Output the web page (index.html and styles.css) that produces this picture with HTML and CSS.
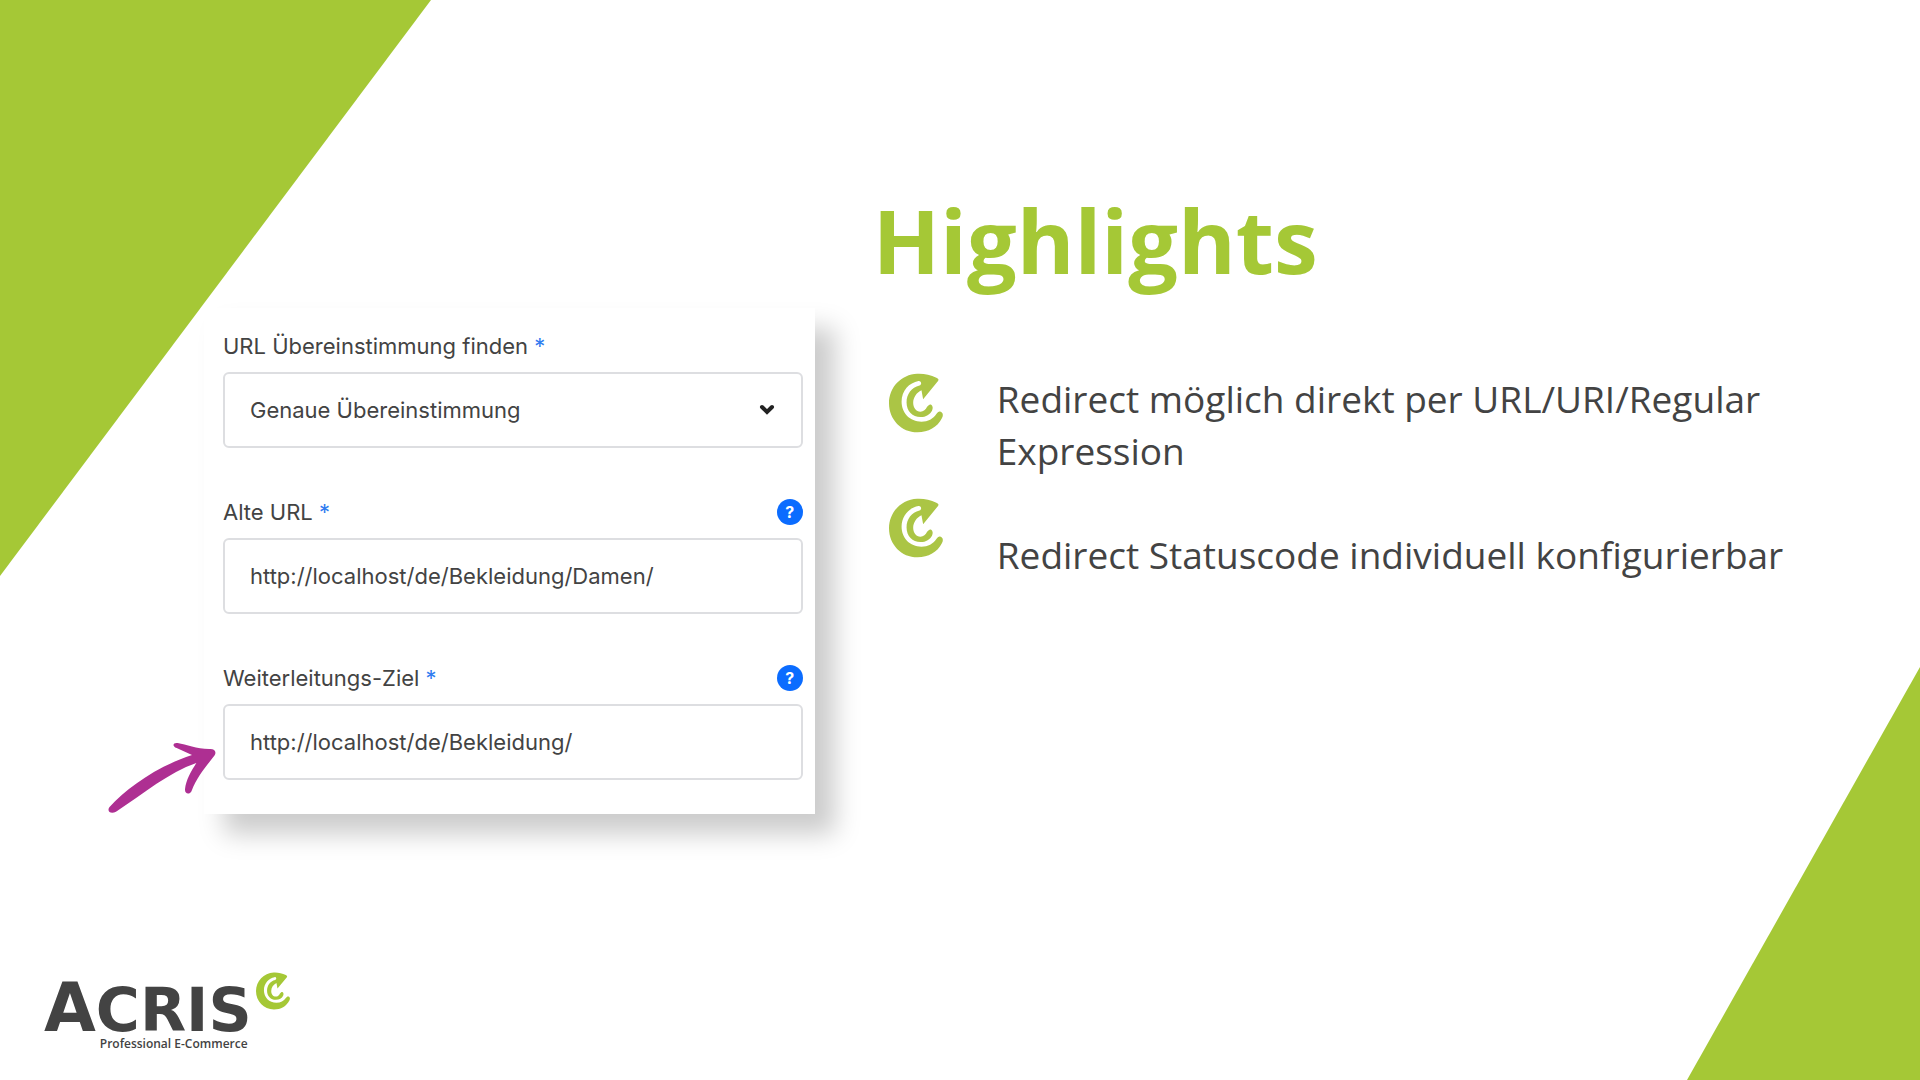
FILE: index.html
```html
<!DOCTYPE html>
<html lang="de">
<head>
<meta charset="utf-8">
<meta name="viewport" content="width=device-width, initial-scale=1">
<title>ACRIS – Highlights</title>
<link rel="stylesheet" href="styles.css">
</head>
<body class="page">
<svg class="symbols" aria-hidden="true">
  <symbol id="acris-mark" viewBox="57 57 163 179">
    <path d="M200 70C182 61 162 57 142 58C94 60 57 99 57 147C57 196 94 235 143 235C176 235 203 220 217 192C222 182 219 175 213 173C208 171 204 174 200 180C190 195 175 203 155 203C120 203 95 177 95 143C95 109 118 85 146 80C155 79 157 91 149 94C125 100 110 120 110 145C110 171 128 189 152 189C169 189 181 181 187 169C191 160 188 153 183 151C179 150 176 153 172 158C168 167 161 173 152 173C139 173 130 161 130 146C130 130 140 115 155 108L160 135L205 80C208 76 206 73 200 70Z"/>
  </symbol>
</svg>
<div class="corner corner-top" aria-hidden="true"></div>
<div class="corner corner-bottom" aria-hidden="true"></div>

<main class="slide">
  <form class="card">
    <div class="field">
      <div class="field-head">
        <label for="match">URL Übereinstimmung finden <span class="required">*</span></label>
      </div>
      <div class="select-wrap">
        <select class="control" id="match"><option>Genaue Übereinstimmung</option></select>
        <svg class="chevron" viewBox="0 0 16 12" aria-hidden="true"><path d="M3 3L8 8L13 3"/></svg>
      </div>
    </div>
    <div class="field">
      <div class="field-head">
        <label for="old-url">Alte URL <span class="required">*</span></label>
        <button class="help" type="button">?</button>
      </div>
      <input class="control" id="old-url" type="text" value="http://localhost/de/Bekleidung/Damen/">
    </div>
    <div class="field">
      <div class="field-head">
        <label for="target">Weiterleitungs-Ziel <span class="required">*</span></label>
        <button class="help" type="button">?</button>
      </div>
      <input class="control" id="target" type="text" value="http://localhost/de/Bekleidung/">
    </div>
    <svg class="arrow" viewBox="0 0 450 330" aria-hidden="true">
      <path d="M58 262C110 205 195 142 306 105L260 84C245 78 249 67 263 69C290 73 322 88 361 87C374 87 380 96 374 106C352 135 322 168 305 212C301 224 284 224 285 208C288 180 303 154 319 129C235 158 165 218 78 275C62 284 50 273 58 262Z"/>
    </svg>
  </form>

  <section class="highlights">
    <h1 class="title">Highlights</h1>
    <div class="points">
      <div class="marks" aria-hidden="true">
        <svg class="mark"><use href="#acris-mark"/></svg>
        <svg class="mark"><use href="#acris-mark"/></svg>
      </div>
      <ul class="list">
        <li>Redirect möglich direkt per URL/URI/Regular Expression</li>
        <li>Redirect Statuscode individuell konfigurierbar</li>
      </ul>
    </div>
  </section>
</main>

<footer class="footer">
  <div class="logo">
    <div class="logo-words">
      <span class="logo-name"><span class="logo-initial">A</span>CRIS</span>
      <span class="logo-tagline">Professional E-Commerce</span>
    </div>
    <svg class="logo-mark" aria-hidden="true"><use href="#acris-mark"/></svg>
  </div>
</footer>
</body>
</html>
```
FILE: styles.css
```css
* {
  box-sizing: border-box;
}

.page {
  position: relative;
  display: flex;
  flex-direction: column;
  min-height: 100vh;
  margin: 0;
  overflow-x: hidden;
  background: #fff;
  color: #434343;
  font-family: "Open Sans", "Noto Sans", sans-serif;
}

.symbols {
  position: absolute;
  width: 0;
  height: 0;
}

/* Green corner wedges behind the content */
.corner {
  position: absolute;
  z-index: -1;
  background: #a5c836;
}

.corner-top {
  top: 0;
  left: 0;
  width: 431px;
  height: 576px;
  clip-path: polygon(0 0, 100% 0, 0 100%);
}

.corner-bottom {
  right: 0;
  bottom: 0;
  width: 233px;
  height: 413px;
  clip-path: polygon(100% 0, 100% 100%, 0 100%);
}

.slide {
  display: grid;
  grid-template-columns: minmax(0, 5fr) minmax(0, 8fr);
  align-items: start;
  gap: 58px;
  padding: 188px 70px 48px 204px;
}

.card {
  position: relative;
  display: flex;
  flex-direction: column;
  gap: 50px;
  margin-top: 120px;
  padding: 24px 12px 34px 19px;
  background: #fff;
  box-shadow: 20px 20px 24px #ccc;
  font-family: Inter, sans-serif;
  font-size: 22px;
}

.field {
  display: flex;
  flex-direction: column;
  gap: 12px;
}

.field-head {
  display: flex;
  align-items: center;
  justify-content: space-between;
  height: 28px;
  line-height: 28px;
}

.required {
  color: #2f7bf0;
}

.help {
  width: 26px;
  height: 26px;
  padding: 0;
  border: 0;
  border-radius: 50%;
  background: #0b6cff;
  color: #fff;
  font: 700 16px/26px Inter, sans-serif;
}

.control {
  width: 100%;
  height: 76px;
  padding: 0 25px;
  border: 2px solid #dddee1;
  border-radius: 6px;
  background: #fff;
  color: #434343;
  font: inherit;
  appearance: none;
}

.select-wrap {
  position: relative;
}

.chevron {
  position: absolute;
  top: 32px;
  right: 28px;
  width: 16px;
  height: 12px;
  fill: none;
  stroke: #222;
  stroke-width: 4;
  stroke-linecap: round;
}

.arrow {
  position: absolute;
  left: -114px;
  bottom: -16px;
  width: 150px;
  height: 110px;
  fill: #ae2f92;
}

.title {
  margin: 0 0 81px;
  color: #a5c836;
  font-size: 88px;
  font-weight: 700;
  line-height: 104px;
}

.points {
  display: flex;
  gap: 54px;
  padding-left: 16px;
}

.marks {
  display: flex;
  flex: none;
  flex-direction: column;
  gap: 65px;
}

.mark {
  width: 54px;
  height: 60px;
  fill: #abc545;
}

.list {
  display: flex;
  flex-direction: column;
  gap: 52px;
  margin: 0;
  padding: 0;
  list-style: none;
  font-size: 37px;
  line-height: 52px;
}

.footer {
  margin-top: auto;
  padding: 0 44px 28px;
}

.logo {
  display: flex;
  align-items: flex-end;
  gap: 4px;
}

.logo-words {
  display: flex;
  flex-direction: column;
  align-items: flex-end;
}

.logo-name {
  font-family: "DejaVu Sans", sans-serif;
  font-size: 60px;
  font-weight: 700;
  line-height: 52px;
}

.logo-initial {
  font-size: 67px;
}

.logo-tagline {
  padding-right: 4px;
  font-size: 12px;
  font-weight: 600;
  line-height: 16px;
}

.logo-mark {
  width: 34px;
  height: 38px;
  margin-bottom: 42px;
  fill: #a5c836;
}
```
